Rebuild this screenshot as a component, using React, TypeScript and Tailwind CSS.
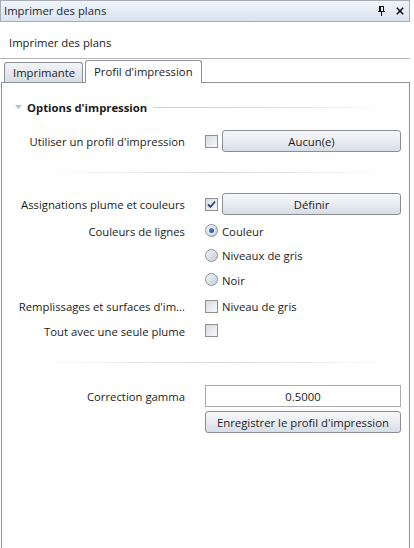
import React from "react";

const Checkbox = ({ checked = false }: { checked?: boolean }) => (
  <div className="w-[13px] h-[13px] shrink-0 border border-[#8f8f8f] bg-linear-to-br from-[#d4dbe4] to-[#f8f9fb] flex items-center justify-center">
    {checked && (
      <svg width="9" height="9" viewBox="0 0 9 9">
        <path d="M1 4.5 L3.5 7 L8 1.5" fill="none" stroke="#31466b" strokeWidth="1.8" />
      </svg>
    )}
  </div>
);

const Radio = ({ checked = false }: { checked?: boolean }) => (
  <div className="w-[13px] h-[13px] shrink-0 rounded-full border border-[#8f9399] bg-linear-to-br from-[#f4f6f9] to-[#c3ccd8] flex items-center justify-center">
    {checked && (
      <div className="w-[7px] h-[7px] rounded-full bg-[#e9f1fb] flex items-center justify-center">
        <div className="w-[5px] h-[5px] rounded-full bg-linear-to-br from-[#5a8ed6] to-[#1d4f9a]" />
      </div>
    )}
  </div>
);

const Button = ({ label, w }: { label: string; w: string }) => (
  <div
    className={`${w} h-[22px] shrink-0 rounded-[3px] border border-[#8a8f97] bg-linear-to-b from-[#f5f7f9] via-[#e9edf2] to-[#d6dde6] flex items-center justify-center`}
  >
    <span className="mt-px">{label}</span>
  </div>
);

const Separator = () => <div className="ml-[38px] w-[357px] h-px bg-linear-to-r from-transparent via-[#d6d6d6] to-transparent" />;

const Label = ({ text }: { text: string }) => (
  <div className="w-[183px] shrink-0 text-right whitespace-nowrap mt-[2px]">{text}</div>
);

const Spacer = () => <div className="w-[183px] shrink-0" />;

export default function App() {
  return (
    <div className="w-[414px] h-[548px] overflow-hidden bg-white text-[11.3px] leading-[16px] text-[#1b1b1b] font-['Open_Sans',sans-serif]">
      <div className="w-[410px]">
        {/* Title bar */}
        <div className="h-[22px] border border-[#a6adb6] bg-linear-to-b from-[#f0f4fa] to-[#d9e4f1] flex items-center pl-[3px] pr-[5px]">
          <span className="text-[#1e2530]">Imprimer des plans</span>
          <div className="ml-auto flex items-center gap-[11px]">
            <svg width="7" height="10" viewBox="0 0 7 10">
              <rect x="1.5" y="0.5" width="4" height="5" fill="none" stroke="#111" />
              <rect x="1" y="0" width="2" height="6" fill="#111" />
              <rect x="0" y="5" width="7" height="1" fill="#111" />
              <rect x="3" y="6" width="1" height="4" fill="#111" />
            </svg>
            <svg width="8" height="8" viewBox="0 0 8 8">
              <path d="M0.8 0.8 L7.2 7.2 M7.2 0.8 L0.8 7.2" stroke="#111" strokeWidth="1.6" />
            </svg>
          </div>
        </div>

        {/* Header */}
        <div className="h-[37px] border-b border-[#b6b6b6] flex items-end pb-[7px] pl-[9px]">
          Imprimer des plans
        </div>

        {/* Tabs */}
        <div className="h-[23px] flex items-end">
          <div className="ml-[4px] w-[79px] h-[20px] border border-b-0 border-[#8d9096] rounded-t-[3px] bg-linear-to-b from-[#f3f5f8] to-[#d7dde5] flex items-center pl-[8px]">
            <span className="mt-px">Imprimante</span>
          </div>
          <div className="ml-[2px] w-[117px] h-[23px] -mb-px relative z-10 border border-b-0 border-[#8d9096] rounded-t-[3px] bg-white flex items-center pl-[8px]">
            <span>Profil d'impression</span>
          </div>
        </div>

        {/* Content */}
        <div className="ml-px h-[470px] border border-[#8e9196] bg-white">
          <div className="mt-[16px] h-[16px] flex items-center pl-[13px]">
            <svg width="7" height="4" viewBox="0 0 7 4">
              <path d="M0 0 L7 0 L3.5 4 Z" fill="#b3c0cf" />
            </svg>
            <span className="ml-[5px] font-bold mt-[2px]">Options d'impression</span>
            <div className="ml-[6px] w-[240px] h-px bg-linear-to-r from-[#cfcfcf] via-[#dcdcdc] to-transparent" />
          </div>

          <div className="mt-[15px] h-[22px] flex items-center">
            <Label text="Utiliser un profil d'impression" />
            <div className="ml-[20px]"><Checkbox /></div>
            <div className="ml-[4px]"><Button label="Aucun(e)" w="w-[179px]" /></div>
          </div>

          <div className="mt-[20px]"><Separator /></div>

          <div className="mt-[20px] h-[22px] flex items-center">
            <Label text="Assignations plume et couleurs" />
            <div className="ml-[20px]"><Checkbox checked /></div>
            <div className="ml-[4px]"><Button label="Définir" w="w-[179px]" /></div>
          </div>

          <div className="mt-[3px] h-[25px] flex items-center">
            <Label text="Couleurs de lignes" />
            <div className="ml-[20px] flex items-center gap-[4px]"><Radio checked /><span className="mt-[2px]">Couleur</span></div>
          </div>
          <div className="h-[24px] flex items-center">
            <Spacer />
            <div className="ml-[20px] flex items-center gap-[4px]"><Radio /><span className="mt-[2px]">Niveaux de gris</span></div>
          </div>
          <div className="h-[25px] flex items-center">
            <Spacer />
            <div className="ml-[20px] flex items-center gap-[4px]"><Radio /><span className="mt-[2px]">Noir</span></div>
          </div>
          <div className="mt-[2px] h-[24px] flex items-center">
            <Label text="Remplissages et surfaces d'im..." />
            <div className="ml-[20px] flex items-center gap-[4px]"><Checkbox /><span className="mt-[2px]">Niveau de gris</span></div>
          </div>
          <div className="h-[25px] flex items-center">
            <Label text="Tout avec une seule plume" />
            <div className="ml-[20px]"><Checkbox /></div>
          </div>

          <div className="mt-[19px]"><Separator /></div>

          <div className="mt-[22px] h-[22px] flex items-center">
            <Label text="Correction gamma" />
            <div className="ml-[20px] w-[196px] h-[22px] border border-[#abadb3] bg-white flex items-center justify-center">
              <span className="mt-px">0.5000</span>
            </div>
          </div>
          <div className="mt-[4px] flex">
            <Spacer />
            <div className="ml-[20px]"><Button label="Enregistrer le profil d'impression" w="w-[196px]" /></div>
          </div>
        </div>
      </div>
    </div>
  );
}
